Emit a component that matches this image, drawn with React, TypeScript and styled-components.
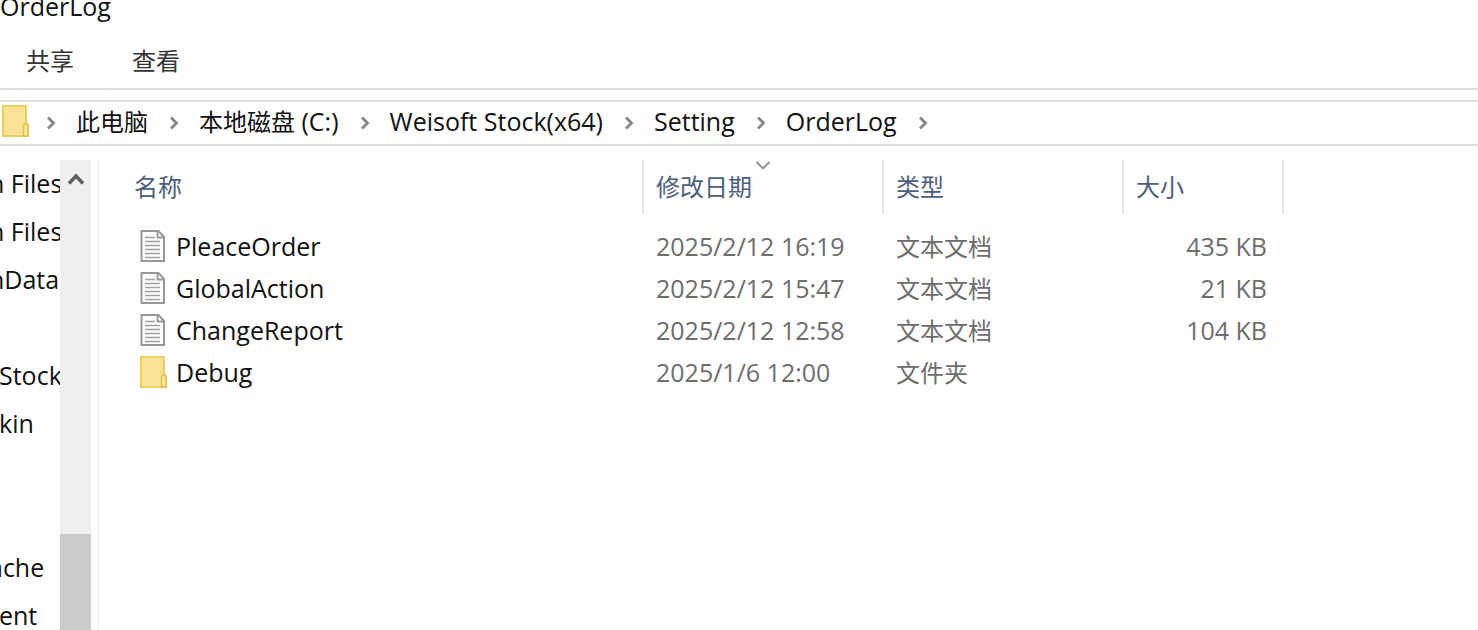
import React from 'react';
import styled, { createGlobalStyle } from 'styled-components';

const GlobalStyle = createGlobalStyle`
  * { box-sizing: border-box; }
  body {
    margin: 0;
    background: #fefefe;
    color: #111;
    font-family: "Open Sans", "Noto Sans CJK SC", sans-serif;
    font-size: 25px;
    line-height: 32px;
    overflow: hidden;
  }
`;

const Window = styled.div`
  display: flex;
  flex-direction: column;
  height: 100vh;
  overflow: hidden;
`;

const TitleBar = styled.header`
  display: flex;
  align-items: flex-end;
  height: 22px;
  flex: none;
`;

const Title = styled.h1`
  margin: 0;
  font-size: 25px;
  font-weight: 400;
  line-height: 32px;
`;

const Ribbon = styled.nav`
  display: flex;
  gap: 58px;
  height: 68px;
  padding: 23px 26px 0;
  border-bottom: 2px solid #dcdfdf;
  flex: none;
`;

const RibbonTab = styled.button`
  align-self: flex-start;
  padding: 0;
  border: 0;
  background: none;
  color: #333;
  font: inherit;
  font-size: 24px;
  line-height: 32px;
`;

const AddressBar = styled.nav`
  display: flex;
  align-items: center;
  height: 46px;
  margin-top: 10px;
  padding: 0 0 4px 2px;
  border: 2px solid #dcdfdf;
  border-width: 2px 0;
  flex: none;
`;

const Crumbs = styled.ol`
  display: flex;
  align-items: center;
  margin: 0;
  padding: 0;
  list-style: none;
`;

const Crumb = styled.li`
  display: flex;
  align-items: center;
`;

const CrumbLink = styled.a`
  margin-right: 4px;
  color: #111;
  text-decoration: none;
  white-space: pre;
`;

const Hanzi = styled.span`
  font-size: 24px;
`;

const ChevronBox = styled.svg`
  display: block;
  width: 10px;
  height: 14px;
  margin: 3px 20px 0 17px;
  flex: none;
`;

const Body = styled.main`
  display: flex;
  flex: 1;
  min-height: 0;
  padding-top: 14px;
`;

const Tree = styled.ul`
  width: 60px;
  margin: -1px 0 0;
  padding: 0;
  list-style: none;
  overflow: hidden;
  flex: none;
`;

const TreeItem = styled.li<{ $shift: number }>`
  height: 48px;
  margin-left: ${(p) => -p.$shift}px;
  line-height: 48px;
  white-space: nowrap;
`;

const ScrollBar = styled.div`
  display: flex;
  flex-direction: column;
  justify-content: space-between;
  width: 31px;
  background: #efefef;
  flex: none;
`;

const ScrollButton = styled.button`
  display: flex;
  justify-content: center;
  align-items: center;
  height: 38px;
  padding: 0;
  border: 0;
  background: none;
`;

const ScrollThumb = styled.div`
  height: 96px;
  background: #cbcbcb;
`;

const Files = styled.section`
  flex: 1;
  min-width: 0;
  margin-left: 6px;
  border-left: 2px solid #f7f7f7;
  overflow: hidden;
`;

const FileTable = styled.table`
  width: 1185px;
  border-collapse: collapse;
  table-layout: fixed;
`;

const Col = styled.col<{ $w: number }>`
  width: ${(p) => p.$w}px;
`;

const HeadCell = styled.th`
  padding: 0 0 12px;
  font-size: 24px;
  font-weight: 400;
  text-align: left;
`;

const HeadLabel = styled.div<{ $first?: boolean }>`
  position: relative;
  height: 54px;
  padding-left: ${(p) => (p.$first ? 35 : 12)}px;
  border-right: 2px solid #e6e6e6;
  color: #4c607a;
  line-height: 54px;
`;

const SortMark = styled.svg`
  position: absolute;
  top: 1px;
  left: 50%;
  width: 16px;
  height: 9px;
  margin-left: -8px;
`;

const Cell = styled.td<{ $right?: boolean }>`
  height: 42px;
  padding: 0 ${(p) => (p.$right ? 17 : 0)}px 2px 12px;
  color: #6d6d6d;
  text-align: ${(p) => (p.$right ? 'right' : 'left')};
  white-space: nowrap;
`;

const NameCell = styled(Cell)`
  padding-left: 41px;
  color: #111;
`;

const FileName = styled.span`
  display: flex;
  align-items: center;
  gap: 9px;
`;

const Icon = styled.svg`
  display: block;
  width: 27px;
  height: 34px;
  flex: none;
`;

const FolderIcon = () => (
  <Icon viewBox="0 0 27 34" aria-hidden="true">
    <path d="M1 2h23v17l2 2v11H1z" fill="#f9e294" stroke="#ebcf62" strokeWidth="2" />
    <path d="M21.500 32V22l2-3 2.500 3v10z" fill="#fae7a0" stroke="#e3c043" strokeWidth="1.500" />
  </Icon>
);

const TextIcon = () => (
  <Icon viewBox="0 0 27 34" aria-hidden="true">
    <path d="M1.500 2h17l5.500 6v24H1.500z" fill="#fdfdfd" stroke="#979797" strokeWidth="2" />
    <path d="M17.500 2v6.500h6" fill="none" stroke="#979797" strokeWidth="1.800" />
    <path d="M5 8.500h10M5 12.500h15M5 16.500h15M5 20.500h15M5 24.500h15M5 28.500h15" stroke="#a2a2a2" strokeWidth="1.500" />
  </Icon>
);

const Chevron = () => (
  <ChevronBox viewBox="0 0 10 14" aria-hidden="true">
    <path d="M2 1.500l5.500 5.500L2 12.500" fill="none" stroke="#858585" strokeWidth="2.800" />
  </ChevronBox>
);

const tree = [
  { text: 'n Files', shift: 11 },
  { text: 'n Files', shift: 11 },
  { text: 'nData', shift: 11 },
  { text: '', shift: 0 },
  { text: 'Stock', shift: 1 },
  { text: 'kin', shift: 1 },
  { text: '', shift: 0 },
  { text: '', shift: 0 },
  { text: 'ache', shift: 11 },
  { text: 'ent', shift: 1 },
];

const path = [
  { hanzi: '此电脑', latin: '' },
  { hanzi: '本地磁盘', latin: ' (C:)' },
  { hanzi: '', latin: 'Weisoft Stock(x64)' },
  { hanzi: '', latin: 'Setting' },
  { hanzi: '', latin: 'OrderLog' },
];

const files = [
  { name: 'PleaceOrder', date: '2025/2/12 16:19', type: '文本文档', size: '435 KB' },
  { name: 'GlobalAction', date: '2025/2/12 15:47', type: '文本文档', size: '21 KB' },
  { name: 'ChangeReport', date: '2025/2/12 12:58', type: '文本文档', size: '104 KB' },
  { name: 'Debug', date: '2025/1/6 12:00', type: '文件夹', size: '' },
];

export default function App() {
  return (
    <Window>
      <GlobalStyle />
      <TitleBar>
        <Title>OrderLog</Title>
      </TitleBar>
      <Ribbon>
        <RibbonTab>共享</RibbonTab>
        <RibbonTab>查看</RibbonTab>
      </Ribbon>
      <AddressBar>
        <FolderIcon />
        <Crumbs>
          {path.map((part) => (
            <Crumb key={part.hanzi + part.latin}>
              <Chevron />
              <CrumbLink href="#">
                {part.hanzi && <Hanzi>{part.hanzi}</Hanzi>}
                {part.latin}
              </CrumbLink>
            </Crumb>
          ))}
        </Crumbs>
        <Chevron />
      </AddressBar>
      <Body>
        <Tree>
          {tree.map((item, i) => (
            <TreeItem key={i} $shift={item.shift}>
              {item.text}
            </TreeItem>
          ))}
        </Tree>
        <ScrollBar>
          <ScrollButton aria-label="向上滚动">
            <svg width="18" height="14" viewBox="0 0 18 14" aria-hidden="true">
              <path d="M2 11.500L9 4l7 7.500" fill="none" stroke="#606060" strokeWidth="3.400" />
            </svg>
          </ScrollButton>
          <ScrollThumb />
        </ScrollBar>
        <Files>
          <FileTable>
            <colgroup>
              <Col $w={545} />
              <Col $w={240} />
              <Col $w={240} />
              <Col $w={160} />
            </colgroup>
            <thead>
              <tr>
                <HeadCell>
                  <HeadLabel $first>名称</HeadLabel>
                </HeadCell>
                <HeadCell aria-sort="descending">
                  <HeadLabel>
                    修改日期
                    <SortMark viewBox="0 0 16 9" aria-hidden="true">
                      <path d="M1.500 1l6.500 6.500L14.500 1" fill="none" stroke="#909090" strokeWidth="1.800" />
                    </SortMark>
                  </HeadLabel>
                </HeadCell>
                <HeadCell>
                  <HeadLabel>类型</HeadLabel>
                </HeadCell>
                <HeadCell>
                  <HeadLabel>大小</HeadLabel>
                </HeadCell>
              </tr>
            </thead>
            <tbody>
              {files.map((f) => (
                <tr key={f.name}>
                  <NameCell>
                    <FileName>
                      {f.size ? <TextIcon /> : <FolderIcon />}
                      {f.name}
                    </FileName>
                  </NameCell>
                  <Cell>{f.date}</Cell>
                  <Cell>
                    <Hanzi>{f.type}</Hanzi>
                  </Cell>
                  <Cell $right>{f.size}</Cell>
                </tr>
              ))}
            </tbody>
          </FileTable>
        </Files>
      </Body>
    </Window>
  );
}
